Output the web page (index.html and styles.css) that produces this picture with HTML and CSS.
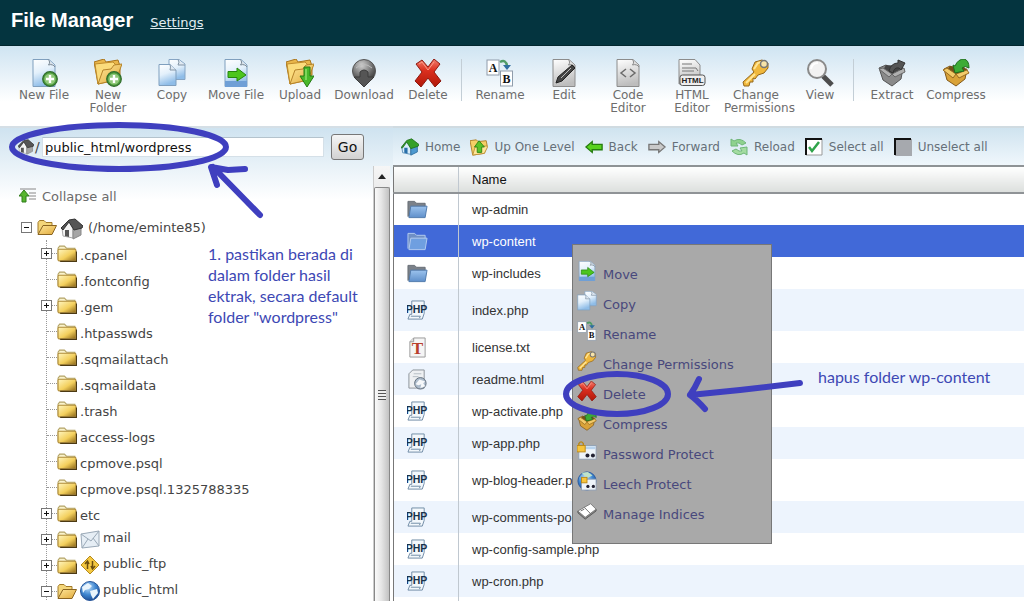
FILE: index.html
```html
<!DOCTYPE html>
<html lang="en">
<head>
<meta charset="utf-8">
<title>File Manager</title>
<link rel="stylesheet" href="styles.css">
</head>
<body>
<svg class="defs" width="0" height="0" aria-hidden="true">
  <defs>
    <linearGradient id="gPage" x1="0" y1="0" x2="0.3" y2="1"><stop offset="0" stop-color="#ffffff"/><stop offset="0.5" stop-color="#e3f0fb"/><stop offset="1" stop-color="#8fbde8"/></linearGradient>
    <linearGradient id="gGray" x1="0" y1="0" x2="0.2" y2="1"><stop offset="0" stop-color="#ffffff"/><stop offset="1" stop-color="#bdbdbd"/></linearGradient>
    <linearGradient id="gFold" x1="0" y1="0" x2="1" y2="1"><stop offset="0" stop-color="#fff6c0"/><stop offset="0.55" stop-color="#f3cf5c"/><stop offset="1" stop-color="#8a6414"/></linearGradient>
    <linearGradient id="gOpen" x1="0" y1="0" x2="1" y2="1"><stop offset="0" stop-color="#ffe79a"/><stop offset="1" stop-color="#e0a93a"/></linearGradient>
    <radialGradient id="gBall" cx="0.4" cy="0.25" r="0.8"><stop offset="0" stop-color="#d0d0d0"/><stop offset="0.6" stop-color="#6c6c6c"/><stop offset="1" stop-color="#2f2f2f"/></radialGradient>
    <radialGradient id="gGlobe" cx="0.4" cy="0.3" r="0.8"><stop offset="0" stop-color="#bfe0fb"/><stop offset="0.5" stop-color="#3f86d0"/><stop offset="1" stop-color="#153f86"/></radialGradient>
    <linearGradient id="gRed" x1="0" y1="0" x2="0" y2="1"><stop offset="0" stop-color="#f08070"/><stop offset="0.4" stop-color="#dc3020"/><stop offset="1" stop-color="#b01808"/></linearGradient>
    <linearGradient id="gBlueF" x1="0" y1="0" x2="0" y2="1"><stop offset="0" stop-color="#9cc3ee"/><stop offset="1" stop-color="#5f8fca"/></linearGradient>
  </defs>
</svg>
<svg class="symbols" aria-hidden="true">
  <symbol id="page" viewBox="0 0 28 28"><path d="M3 .5H19L25 6V27.500H3Z" fill="url(#gPage)" stroke="#7f9fbe"/><path d="M18 .5C20 2 20 4 18.500 6C21 5 24 6 25 8" fill="#d5dde5" stroke="#7a8894"/></symbol>
  <symbol id="graypage" viewBox="0 0 28 28"><path d="M3 .5H19L25 6V27.500H3Z" fill="url(#gGray)" stroke="#8c8c8c"/><path d="M18 .5C20 2 20 4 18.500 6C21 5 24 6 25 8" fill="#ddd" stroke="#888"/></symbol>
  <symbol id="plus" viewBox="0 0 28 28"><circle cx="20" cy="20" r="7.300" fill="#4b9a3c" stroke="#2f6b2a" stroke-width="1.200"/><circle cx="20" cy="20" r="5.600" fill="#8fc87a"/><path d="M20 16V24M16 20H24" stroke="#fff" stroke-width="2.400"/></symbol>
  <symbol id="newfile" viewBox="0 0 28 28"><use href="#page"/><use href="#plus"/></symbol>
  <symbol id="bigfolder" viewBox="0 0 28 28"><path d="M0 3L10 0L12 3L24 1L26 7V16L4 25Z" fill="#e9b64a" stroke="#a8741c"/><path d="M1 5L19 3L22 6L18 22L4 25Z" fill="#fbdc7c" stroke="#c08c2c"/><path d="M4 25L9 11L17 10L20 6L28 5L22 21Z" fill="url(#gOpen)" stroke="#b5832a"/></symbol>
  <symbol id="newfolder" viewBox="0 0 28 28"><use href="#bigfolder"/><use href="#plus"/></symbol>
  <symbol id="copy" viewBox="0 0 28 28"><path d="M11 .5H21L27 5V20.500H11Z" fill="url(#gPage)" stroke="#86a5c4"/><path d="M20 .5Q22 3 20 6L27 6" fill="#dfe8f1" stroke="#8294a5"/><path d="M1 5.500H12L18 11V26.500H1Z" fill="url(#gPage)" stroke="#7f9fbe"/><path d="M12 5.500Q13 8 12 11H18" fill="#dfe8f1" stroke="#8294a5"/></symbol>
  <symbol id="move" viewBox="0 0 28 28"><use href="#page"/><path d="M3 22H25V28H3Z" fill="#6f9fd6"/><path d="M6 12.500H15V9L24 16L15 22V18.500H6Z" fill="#4cc51e" stroke="#26860e"/></symbol>
  <symbol id="upload" viewBox="0 0 28 28"><use href="#bigfolder"/><path d="M18 8H24V17H28L21 28L14 17H18Z" fill="#48b82a" stroke="#267a14"/><path d="M20 10V21" stroke="#8fe06c" stroke-width="1.500"/></symbol>
  <symbol id="download" viewBox="0 0 28 28"><circle cx="14" cy="12" r="11.500" fill="url(#gBall)" stroke="#555"/><path d="M10 13Q14 9 18 13V18H24L14 28L4 18H10Z" fill="#555" stroke="#3c3c3c"/><path d="M6 9Q14 2 22 9" stroke="#bbb" fill="none"/></symbol>
  <symbol id="delete" viewBox="0 0 28 28"><path d="M2 5L8 1L14 8L20 0L26 5L20 13L27 22L21 28L14 19L7 28L1 22L8 13Z" fill="url(#gRed)" stroke="#8e1a10" stroke-linejoin="round"/><path d="M5 5L8 3L14 11L20 3" stroke="#ff9a88" fill="none"/></symbol>
  <symbol id="rename" viewBox="0 0 28 28"><rect x="1" y="1" width="12" height="15" fill="#fff" stroke="#8f9cab"/><rect x="14.500" y="12" width="12" height="15" fill="#fff" stroke="#8f9cab"/><text x="7" y="13" class="glyph-serif">A</text><text x="20.500" y="24" class="glyph-serif">B</text><path d="M14 3Q20 0 21 7" fill="none" stroke="#4f9c66" stroke-width="2.500"/><path d="M17 6H25L21 11Z" fill="#2f6fa0"/></symbol>
  <symbol id="edit" viewBox="0 0 28 28"><use href="#graypage"/><path d="M22 6L25 9L12 22L6 24L8 18Z" fill="#444" stroke="#222"/><path d="M21 9L11 19" stroke="#bbb"/></symbol>
  <symbol id="code" viewBox="0 0 28 28"><use href="#graypage"/><path d="M12 10L7 14L12 18M16 10L21 14L16 18" fill="none" stroke="#6b6b6b" stroke-width="1.500"/></symbol>
  <symbol id="html" viewBox="0 0 28 28"><path d="M1 .5H17L22 6V25H1Z" fill="url(#gGray)" stroke="#8c8c8c"/><path d="M4 5H14M4 9H18L20 12M4 12H16" stroke="#777" fill="none"/><rect x="2" y="16" width="25" height="10.500" rx="2.500" fill="#eee" stroke="#555"/><text x="14.500" y="24" class="glyph-html">HTML</text></symbol>
  <symbol id="key" viewBox="0 0 28 28"><path d="M10 10L13 3L20 1L26 4V9L22 14L16 16L13 20L11 19V23L8 23L7 27L2 27L1 23L12 13Z" fill="#f0b83c" stroke="#94661a" stroke-linejoin="round"/><path d="M12 10L16 4L20 3M4 24L13 15" stroke="#ffe596" stroke-width="2" fill="none"/><circle cx="22" cy="5" r="3.500" fill="#f7e3a8" stroke="#777" stroke-width="1.500"/></symbol>
  <symbol id="view" viewBox="0 0 28 28"><path d="M17 17L26 26" stroke="#4d4d4d" stroke-width="5"/><circle cx="11" cy="10" r="9" fill="#f2f2f2" stroke="#8a8a8a" stroke-width="2"/><path d="M5 10Q6 4 12 4" fill="none" stroke="#fff" stroke-width="2"/></symbol>
  <symbol id="extract" viewBox="0 0 28 28"><path d="M1 9L8 6L14 10L25 9L23 20L14 27L5 21Z" fill="#8a8a8a" stroke="#555"/><path d="M8 6L22 7L25 11L14 15L5 11Z" fill="#444"/><path d="M1 10L5 9L14 15L11 18ZM14 15L26 9L27 13L17 18Z" fill="#b0b0b0" stroke="#666"/><path d="M11 12Q13 4 20 4L20 1L27 4L23 11L21 9Q16 8 15 14Z" fill="#555" stroke="#333"/></symbol>
  <symbol id="compress" viewBox="0 0 28 28"><path d="M2 10L8 7L14 11L25 10L23 20L14 27L5 21Z" fill="#d9a238" stroke="#82591b"/><path d="M8 7L22 8L25 11L14 15L5 11Z" fill="#71501a"/><path d="M1 11L5 9L14 15L11 19ZM14 15L25 11L27 14L17 19Z" fill="#f2ca69" stroke="#96691f"/><path d="M13 14L11 6L13 7Q16 0 22 0Q27 1 27 9Q23 6 20 9L22 12Z" fill="#3cab35" stroke="#1f6c1d"/></symbol>
  <symbol id="house" viewBox="0 0 22 22"><path d="M1 10L8 3L12 11V20L2 18Z" fill="#f4f4f4" stroke="#aaa"/><path d="M12 11L20 8V17L12 21Z" fill="#a5a5a5" stroke="#888"/><path d="M0 10L8 2L14 1L22 8L21 10L13 12L8 4L2 12Z" fill="#555" stroke="#333"/><path d="M4 12H8V19L4 18Z" fill="#555"/></symbol>
  <symbol id="homegreen" viewBox="0 0 22 22"><path d="M1 11L7 4L12 11V20L2 18Z" fill="#d8ecfa" stroke="#4e86b0"/><path d="M12 11L20 8V17L12 21Z" fill="#4d99cf" stroke="#2f6c9c"/><path d="M0 12L7 3L13 1L22 8L21 10L12 13L7 5L2 12Z" fill="#35a028" stroke="#206f1c"/><path d="M4 12H8V19L4 18Z" fill="#296fa9"/></symbol>
  <symbol id="up" viewBox="0 0 20 18"><path d="M0 2L7 1L9 3L18 2L19 7L16 16L3 18Z" fill="#f4cf66" stroke="#ad7d25"/><path d="M3 18L6 8H20L16 16Z" fill="#ffe698" stroke="#bc9138"/><path d="M10 2L16 9H13V15H8V9H5Z" fill="#5bc229" stroke="#2b8211"/></symbol>
  <symbol id="back" viewBox="0 0 20 14"><path d="M1 7L8 1V4H19V10H8V13Z" fill="#59d21f" stroke="#267d10" stroke-width="1.500"/></symbol>
  <symbol id="forward" viewBox="0 0 20 14"><path d="M19 7L12 1V4H1V10H12V13Z" fill="#c9c9c9" stroke="#777" stroke-width="1.500"/></symbol>
  <symbol id="reload" viewBox="0 0 18 18"><path d="M1 8V1L4 3Q10-1 16 5L12 7Q9 4 6 5L8 8Z" fill="#8fd28e" stroke="#6fb678"/><path d="M17 9V17L14 15Q8 19 2 13L6 11Q9 14 12 13L10 10Z" fill="#a4dca1" stroke="#6fb678"/></symbol>
  <symbol id="checked" viewBox="0 0 18 18"><path d="M1 1H17V17H1Z" fill="#fff" stroke="#999" stroke-width="1"/><path d="M1 17V1H17" fill="none" stroke="#111" stroke-width="2"/><path d="M4 9L7 13L14 4" fill="none" stroke="#2fa34a" stroke-width="2.500"/></symbol>
  <symbol id="unchecked" viewBox="0 0 18 18"><path d="M1 1H18V18H1Z" fill="#a6a9ae"/><path d="M1 17V1H17" fill="none" stroke="#111" stroke-width="2"/></symbol>
  <symbol id="collapse" viewBox="0 0 18 16"><path d="M1 1H17M10 5H17M10 8H17M10 11H17" stroke="#888"/><path d="M5 2L10 8H7V14H3V8H0Z" fill="#57b52f" stroke="#2f7c1a"/></symbol>
  <symbol id="folder" viewBox="0 0 19 16"><path d="M1 14V3L2.500 1H7L9 3H17V6" fill="#faf3cc" stroke="#b3a264"/><rect x="1" y="4" width="17" height="11" rx="1" fill="url(#gFold)" stroke="#b08c38"/><path d="M3 15.500H18.500V6" fill="none" stroke="#4c3a14"/></symbol>
  <symbol id="folderopen" viewBox="0 0 20 16"><path d="M1 14V3L2.500 1H7L9 3H15V7" fill="#f4d67a" stroke="#a27a28"/><path d="M1 15L6 6H19.500L15 15Z" fill="url(#gOpen)" stroke="#8a6420"/></symbol>
  <symbol id="bluefolder" viewBox="0 0 22 19"><path d="M1 17V1H8L10 3H19V8" fill="#7b8189" stroke="#666c74"/><path d="M4 6H21L19 18H2Z" fill="url(#gBlueF)" stroke="#4f79ab"/></symbol>
  <symbol id="bluefolderlit" viewBox="0 0 22 19"><path d="M1 17V1H8L10 3H19V8" fill="#6f8fc4" stroke="#b4cdf0"/><path d="M4 6H21L19 18H2Z" fill="#6f9fe0" stroke="#b4cdf0"/></symbol>
  <symbol id="php" viewBox="0 0 22 22"><path d="M5 1H18V14L16 20H1L3 15H5Z" fill="#f3f8fc" stroke="#6f8ba5"/><path d="M4 17H14L13 19" fill="none" stroke="#6f8ba5"/><text x="10" y="14" class="glyph-php">PHP</text></symbol>
  <symbol id="txt" viewBox="0 0 20 22"><path d="M6 1H18V21H2V5Z" fill="#f5f5f5" stroke="#999"/><path d="M2 5H6V1" fill="#ddd" stroke="#999"/><text x="10" y="18" class="glyph-t">T</text></symbol>
  <symbol id="web" viewBox="0 0 22 22"><path d="M6 1H18V20H2V5Z" fill="#eef0f2" stroke="#8c9298"/><path d="M7 5H15M6 8H12" stroke="#b5bcc3"/><circle cx="14" cy="15" r="6" fill="#aebdcd" stroke="#5f6c7a"/><path d="M9 16L13 11L19 13L17 15L19 18L14 20L15 16L12 17Z" fill="#f6f8fa"/></symbol>
  <symbol id="mail" viewBox="0 0 20 18"><path d="M1 4L19 1L19 16L2 18Z" fill="#e6eef5" stroke="#9aa9b7"/><path d="M1 4L11 11L19 1M2 18L8 9M19 16L13 8" fill="none" stroke="#9aa9b7"/></symbol>
  <symbol id="ftp" viewBox="0 0 20 20"><path d="M10 1L19 10L10 19L1 10Z" fill="#f4c842" stroke="#b48a1e"/><path d="M7.500 14V7M5 9L7.500 6L9 9M12.500 6V13M11 11L12.500 14L15 11" stroke="#6a4d10" stroke-width="1.500" fill="none"/></symbol>
  <symbol id="globe" viewBox="0 0 20 20"><circle cx="10" cy="10" r="9.500" fill="url(#gGlobe)" stroke="#28569a"/><path d="M2 6L8 2L12 5L9 8L5 9L3 12ZM10 10L17 8L18 12L13 18L11 14Z" fill="#e9f4fc"/></symbol>
  <symbol id="protect" viewBox="0 0 22 20"><rect x="2" y="4" width="19" height="15" fill="#eef4fa" stroke="#8f9fb2"/><rect x="3" y="5" width="17" height="3" fill="#b7d3ee"/><circle cx="11.500" cy="15" r="2.200" fill="#223"/><circle cx="17.500" cy="15" r="2.200" fill="#223"/><path d="M2 5V2Q4.500-2 7 2V5" fill="none" stroke="#b88717" stroke-width="1.500"/><rect x="0" y="4" width="9" height="7" fill="#f7c53d" stroke="#b88717"/></symbol>
  <symbol id="leech" viewBox="0 0 22 22"><circle cx="11" cy="11" r="10" fill="url(#gGlobe)" stroke="#28569a"/><path d="M5 2L12 1L17 5L11 8Z" fill="#bfe3c9"/><rect x="5" y="9" width="16" height="12" fill="#eef4fa" stroke="#8f9fb2"/><circle cx="12" cy="17" r="1.800" fill="#223"/><circle cx="18" cy="17" r="1.800" fill="#223"/><rect x="5" y="7" width="6" height="6" fill="#f7c53d" stroke="#b88717"/></symbol>
  <symbol id="book" viewBox="0 0 22 18"><path d="M1 9V11L9 18L21 9V7" fill="#888" stroke="#555"/><path d="M1 9L15 1L21 7L9 16Z" fill="#fff" stroke="#777"/><path d="M8 5L15 12M4 9L8 7" stroke="#666" fill="none"/></symbol>
</svg>

<div class="app">
  <header class="topbar">
    <h1 class="title">File Manager</h1>
    <a class="settings" href="#">Settings</a>
  </header>

  <nav class="toolbar" aria-label="File actions">
    <button class="tool"><svg><use href="#newfile"/></svg>New File</button>
    <button class="tool"><svg><use href="#newfolder"/></svg>New Folder</button>
    <button class="tool"><svg><use href="#copy"/></svg>Copy</button>
    <button class="tool"><svg><use href="#move"/></svg>Move File</button>
    <button class="tool"><svg><use href="#upload"/></svg>Upload</button>
    <button class="tool"><svg><use href="#download"/></svg>Download</button>
    <button class="tool"><svg><use href="#delete"/></svg>Delete</button>
    <span class="sep"></span>
    <button class="tool"><svg><use href="#rename"/></svg>Rename</button>
    <button class="tool"><svg><use href="#edit"/></svg>Edit</button>
    <button class="tool"><svg><use href="#code"/></svg>Code Editor</button>
    <button class="tool"><svg><use href="#html"/></svg>HTML Editor</button>
    <button class="tool"><svg><use href="#key"/></svg>Change Permissions</button>
    <button class="tool"><svg><use href="#view"/></svg>View</button>
    <span class="sep"></span>
    <button class="tool"><svg><use href="#extract"/></svg>Extract</button>
    <button class="tool"><svg><use href="#compress"/></svg>Compress</button>
  </nav>

  <div class="columns">
    <aside class="sidebar">
      <form class="path">
        <label class="root" for="dir"><svg><use href="#house"/></svg>/</label>
        <input id="dir" class="dir" type="text" value="public_html/wordpress">
        <button class="go" type="button">Go</button>
      </form>
      <div class="browse">
        <div class="treepane">
          <button class="collapse"><svg><use href="#collapse"/></svg>Collapse all</button>
          <div class="home"><button class="toggle minus" aria-label="Collapse"></button><svg class="fold"><use href="#folderopen"/></svg><svg class="big"><use href="#house"/></svg><span>(/home/eminte85)</span></div>
          <ul class="tree">
            <li><button class="toggle" aria-label="Expand"></button><svg class="fold"><use href="#folder"/></svg><span>.cpanel</span></li>
            <li><svg class="fold"><use href="#folder"/></svg><span>.fontconfig</span></li>
            <li><button class="toggle" aria-label="Expand"></button><svg class="fold"><use href="#folder"/></svg><span>.gem</span></li>
            <li><svg class="fold"><use href="#folder"/></svg><span>.htpasswds</span></li>
            <li><svg class="fold"><use href="#folder"/></svg><span>.sqmailattach</span></li>
            <li><svg class="fold"><use href="#folder"/></svg><span>.sqmaildata</span></li>
            <li><svg class="fold"><use href="#folder"/></svg><span>.trash</span></li>
            <li><svg class="fold"><use href="#folder"/></svg><span>access-logs</span></li>
            <li><svg class="fold"><use href="#folder"/></svg><span>cpmove.psql</span></li>
            <li><svg class="fold"><use href="#folder"/></svg><span>cpmove.psql.1325788335</span></li>
            <li><button class="toggle" aria-label="Expand"></button><svg class="fold"><use href="#folder"/></svg><span>etc</span></li>
            <li class="special"><button class="toggle" aria-label="Expand"></button><svg class="fold"><use href="#folder"/></svg><svg class="kind"><use href="#mail"/></svg><span>mail</span></li>
            <li class="special"><button class="toggle" aria-label="Expand"></button><svg class="fold"><use href="#folder"/></svg><svg class="kind"><use href="#ftp"/></svg><span>public_ftp</span></li>
            <li class="special"><button class="toggle minus" aria-label="Collapse"></button><svg class="fold"><use href="#folderopen"/></svg><svg class="kind"><use href="#globe"/></svg><span>public_html</span></li>
          </ul>
        </div>
        <div class="scroll">
          <button class="arrow" aria-label="Scroll up"></button>
          <div class="thumb"><i class="grip"></i></div>
        </div>
      </div>
    </aside>

    <main class="files">
      <nav class="actions" aria-label="Navigation">
        <button><svg><use href="#homegreen"/></svg>Home</button>
        <button><svg><use href="#up"/></svg>Up One Level</button>
        <button><svg><use href="#back"/></svg>Back</button>
        <button><svg><use href="#forward"/></svg>Forward</button>
        <button><svg><use href="#reload"/></svg>Reload</button>
        <button><svg><use href="#checked"/></svg>Select all</button>
        <button><svg><use href="#unchecked"/></svg>Unselect all</button>
      </nav>
      <table class="list">
        <thead><tr><th class="icon"></th><th>Name</th></tr></thead>
        <tbody>
          <tr><td class="icon"><svg><use href="#bluefolder"/></svg></td><td>wp-admin</td></tr>
          <tr class="selected"><td class="icon"><svg><use href="#bluefolderlit"/></svg></td><td>wp-content</td></tr>
          <tr><td class="icon"><svg><use href="#bluefolder"/></svg></td><td>wp-includes</td></tr>
          <tr class="tall"><td class="icon"><svg><use href="#php"/></svg></td><td>index.php</td></tr>
          <tr><td class="icon"><svg><use href="#txt"/></svg></td><td>license.txt</td></tr>
          <tr><td class="icon"><svg><use href="#web"/></svg></td><td>readme.html</td></tr>
          <tr><td class="icon"><svg><use href="#php"/></svg></td><td>wp-activate.php</td></tr>
          <tr><td class="icon"><svg><use href="#php"/></svg></td><td>wp-app.php</td></tr>
          <tr class="tall"><td class="icon"><svg><use href="#php"/></svg></td><td>wp-blog-header.php</td></tr>
          <tr><td class="icon"><svg><use href="#php"/></svg></td><td>wp-comments-post.php</td></tr>
          <tr><td class="icon"><svg><use href="#php"/></svg></td><td>wp-config-sample.php</td></tr>
          <tr><td class="icon"><svg><use href="#php"/></svg></td><td>wp-cron.php</td></tr>
          <tr><td class="icon"></td><td></td></tr>
        </tbody>
      </table>
    </main>
  </div>

  <menu class="context">
    <li><button><svg><use href="#move"/></svg><span>Move</span></button></li>
    <li><button><svg><use href="#copy"/></svg><span>Copy</span></button></li>
    <li><button><svg><use href="#rename"/></svg><span>Rename</span></button></li>
    <li><button><svg><use href="#key"/></svg><span>Change Permissions</span></button></li>
    <li><button><svg><use href="#delete"/></svg><span>Delete</span></button></li>
    <li><button><svg><use href="#compress"/></svg><span>Compress</span></button></li>
    <li><button><svg><use href="#protect"/></svg><span>Password Protect</span></button></li>
    <li><button><svg><use href="#leech"/></svg><span>Leech Protect</span></button></li>
    <li><button><svg><use href="#book"/></svg><span>Manage Indices</span></button></li>
  </menu>

  <svg class="marks" width="1024" height="601" aria-hidden="true">
    <ellipse cx="119" cy="147" rx="107" ry="22"/>
    <path d="M260 215L213 167M245 169L228 170L211 167L217 185"/>
    <ellipse cx="617" cy="394" rx="51" ry="20"/>
    <path d="M800 383L740 390L690 395M699 379Q695 388 690 395Q697 400 705 409"/>
  </svg>
  <p class="note first">1. pastikan berada di<br>dalam folder hasil<br>ektrak, secara default<br>folder "wordpress"</p>
  <p class="note second">hapus folder wp-content</p>
</div>
</body>
</html>
```
FILE: styles.css
```css
* { box-sizing: border-box; }
body { margin: 0; font-family: "DejaVu Sans", Verdana, sans-serif; font-size: 13px; color: #444; background: #fff; }
button { font: inherit; color: inherit; background: none; border: 0; padding: 0; cursor: pointer; }
svg { flex: none; overflow: visible; }
.defs { position: absolute; }
.symbols { display: none; }
.app { position: relative; display: flex; flex-direction: column; height: 100vh; overflow: hidden; }

.topbar { flex: none; display: flex; align-items: baseline; gap: 17px; height: 46px; padding: 8px 11px; background: #04343f; border-bottom: 1px solid #02262e; color: #fff; }
.title { margin: 0; font: bold 20px/24px "Liberation Sans", Arial, sans-serif; }
.settings { color: #e2eef2; }

.toolbar { flex: none; display: flex; align-items: flex-start; height: 80px; padding: 13px 12px 0; background: linear-gradient(#cfe4f2, #fff 70%); }
.tool { flex: none; display: block; width: 64px; font-size: 12px; line-height: 13px; color: #6d6d6d; text-align: center; }
.tool svg { display: block; width: 28px; height: 28px; margin: 0 auto 2px; }
.sep { width: 1px; height: 42px; margin: 0 6px 0 1px; background: #c3ced6; }

.columns { flex: 1; display: flex; min-height: 0; }
.sidebar { flex: none; display: flex; flex-direction: column; width: 393px; background: linear-gradient(#cfe3f0, #fff 72px); border-top: 2px solid #d5dfe6; }
.path { display: flex; align-items: center; height: 38px; padding: 0 29px 0 18px; }
.root { display: flex; align-items: center; gap: 1px; width: 24px; font-size: 14px; }
.root svg { width: 16px; height: 16px; }
.dir { flex: 1; min-width: 0; height: 20px; padding: 0 2px; border: 1px solid #d5e0e8; border-top-color: #b4c3cd; background: #fff; font: 13px "DejaVu Sans", sans-serif; color: #111; }
.go { width: 33px; height: 26px; margin-left: 7px; border: 1px solid #777; border-radius: 3px; background: linear-gradient(#f5f5f5, #d2d2d2); font-size: 14px; color: #111; }

.browse { flex: 1; display: flex; min-height: 0; }
.treepane { flex: 1; min-width: 0; padding-top: 19px; overflow: hidden; }
.collapse { display: flex; align-items: center; gap: 5px; height: 22px; margin-left: 19px; color: #6b6b6b; }
.collapse svg { width: 18px; height: 16px; }
.home { display: flex; align-items: center; height: 33px; padding: 8px 0 0 21px; }
.home span { margin-left: 5px; }
.big { width: 22px; height: 22px; margin: 2px 0 0 4px; }
.fold { width: 20px; height: 17px; }
.home .fold { margin-left: 5px; }
.toggle { position: relative; z-index: 1; flex: none; width: 11px; height: 11px; border: 1px solid #777; background: linear-gradient(#111, #111) center / 5px 1px no-repeat, linear-gradient(#111, #111) center / 1px 5px no-repeat, #fff; }
.toggle.minus { background: linear-gradient(#111, #111) center / 5px 1px no-repeat, #fff; }
.tree { list-style: none; margin: 0 0 0 46px; padding: 0; border-left: 1px dotted #999; }
.tree li { display: flex; align-items: center; height: 26px; }
.tree li::before { content: ""; order: -1; width: 10px; border-top: 1px dotted #999; }
.tree .toggle { order: -2; margin: 0 -5px 0 -6px; }
.tree span { margin-left: 3px; padding-top: 4px; }
.kind { width: 20px; height: 20px; margin-left: 3px; }
.tree .special span { padding: 0 0 4px; }

.scroll { display: flex; flex-direction: column; width: 17px; margin-right: 3px; background: #eee; border-left: 1px solid #ccc; }
.arrow { height: 21px; background: linear-gradient(#f6f6f6, #ececec); display: grid; place-items: center; }
.arrow::before { content: ""; border: 4px solid transparent; border-top: 0; border-bottom: 5px solid #222; }
.thumb { flex: 1; display: grid; place-items: center; border: 1px solid #888; border-bottom: 0; border-radius: 2px 2px 0 0; background: linear-gradient(90deg, #fafafa, #e6e6e6 45%, #c2c2c2); }
.grip { width: 8px; height: 10px; background: repeating-linear-gradient(#555 0 1px, #eee 1px 3px); }

.files { flex: 1; min-width: 0; }
.actions { display: flex; align-items: center; gap: 10px; height: 39px; padding: 0 8px; border-top: 2px solid #d0dbe1; background: linear-gradient(#cfe3ef, #f0f7fc); font-size: 12px; color: #667079; }
.actions button { display: flex; align-items: center; gap: 6px; white-space: nowrap; }
.actions svg { width: 18px; height: 18px; }
.list { width: 100%; border-collapse: collapse; border-left: 1px solid #777; font: 13px "Liberation Sans", Arial, sans-serif; color: #333; }
.list th { height: 27px; padding: 0 13px; border-top: 2px solid #8f9396; border-bottom: 2px solid #8f9396; background: linear-gradient(#fff, #dcdfdd); font-weight: normal; text-align: left; color: #111; }
.list td { height: 32px; padding: 0 13px; }
.list .tall td { height: 42px; }
.list .icon { width: 65px; border-right: 1px solid #c0c8d0; }
.list svg { display: block; width: 21px; height: 21px; }
.list tbody tr:nth-child(n+4):nth-child(even) { background: #edf4fd; }
.list .selected { background: #4169d8; color: #fff; }

.context { position: absolute; left: 572px; top: 244px; width: 200px; margin: 0; padding: 12px 4px 16px; list-style: none; background: #a9a9a9; border: 1px solid #777; color: #48487c; }
.context button { display: flex; width: 100%; height: 30px; align-items: center; gap: 6px; }
.context svg { width: 20px; height: 20px; margin-bottom: 2px; }
.context span { padding-top: 4px; }

.marks { position: absolute; left: 0; top: 0; fill: none; stroke: #3f3fbf; stroke-width: 6; stroke-linecap: round; stroke-linejoin: round; pointer-events: none; }
.note { position: absolute; margin: 0; font: 16px/21px Lato, "Open Sans", sans-serif; color: #3d48b4; white-space: nowrap; }
.first { left: 208px; top: 243px; }
.second { left: 818px; top: 366px; }

.glyph-serif { font: bold 12px "Liberation Serif", serif; text-anchor: middle; fill: #111; }
.glyph-html { font: bold 8px "Liberation Sans", sans-serif; text-anchor: middle; fill: #222; }
.glyph-php { font: bold 11px "Liberation Sans Narrow", "Liberation Sans", sans-serif; text-anchor: middle; fill: #17324a; }
.glyph-t { font: bold 18px "Liberation Serif", serif; text-anchor: middle; fill: #b8402c; }
```
